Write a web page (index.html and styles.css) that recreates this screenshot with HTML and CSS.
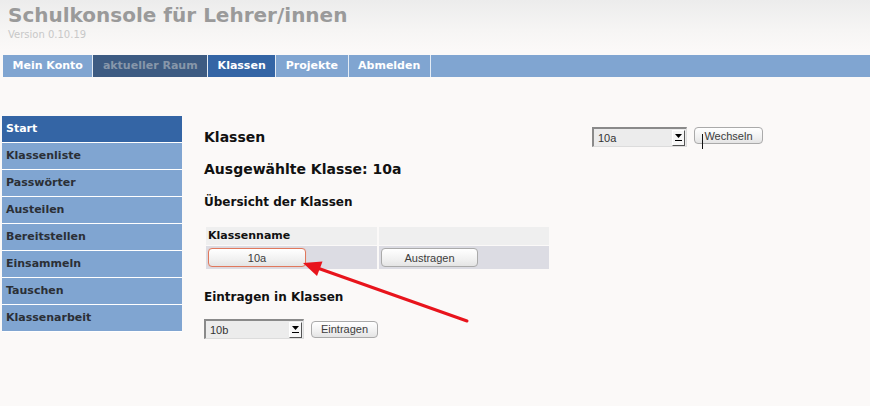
FILE: index.html
```html
<!DOCTYPE html>
<html lang="de">
<head>
<meta charset="utf-8">
<title>Schulkonsole</title>
<link rel="stylesheet" href="styles.css">
</head>
<body>
<header class="header">
  <div class="title">Schulkonsole für Lehrer/innen</div>
  <div class="version">Version 0.10.19</div>
</header>
<nav class="topnav">
  <a class="navitem">Mein Konto</a>
  <span class="navitem disabled">aktueller Raum</span>
  <a class="navitem active">Klassen</a>
  <a class="navitem">Projekte</a>
  <a class="navitem">Abmelden</a>
  <div class="navfill"></div>
</nav>
<div class="layout">
  <ul class="sidebar">
    <li class="sideitem active">Start</li>
    <li class="sideitem">Klassenliste</li>
    <li class="sideitem">Passwörter</li>
    <li class="sideitem">Austeilen</li>
    <li class="sideitem">Bereitstellen</li>
    <li class="sideitem">Einsammeln</li>
    <li class="sideitem">Tauschen</li>
    <li class="sideitem">Klassenarbeit</li>
  </ul>
  <main class="content">
    <div class="toprow">
      <h1 class="h1">Klassen</h1>
      <div class="switch">
        <div class="fakeselect sel-top">
          <span class="seltext">10a</span>
          <span class="selarrow"><svg width="7" height="7" viewBox="0 0 7 7"><path d="M0 0H7L3.5 4Z" fill="#000"/><rect x="0" y="6" width="7" height="1" fill="#000"/></svg></span>
        </div>
        <button class="btn btn-wechseln">Wechseln</button>
        <span class="cursor"></span>
      </div>
    </div>
    <h2 class="h2">Ausgewählte Klasse: 10a</h2>
    <h3 class="h3">Übersicht der Klassen</h3>
    <div class="ktable">
      <div class="th">Klassenname</div>
      <div class="th"></div>
      <div class="td"><button class="btn btn-class focus">10a</button></div>
      <div class="td"><button class="btn btn-class">Austragen</button></div>
    </div>
    <h3 class="h3 h3-add">Eintragen in Klassen</h3>
    <div class="addrow">
      <div class="fakeselect sel-add">
        <span class="seltext">10b</span>
        <span class="selarrow"><svg width="7" height="7" viewBox="0 0 7 7"><path d="M0 0H7L3.5 4Z" fill="#000"/><rect x="0" y="6" width="7" height="1" fill="#000"/></svg></span>
      </div>
      <button class="btn btn-eintragen">Eintragen</button>
    </div>
  </main>
</div>
<svg class="annot" width="870" height="406" viewBox="0 0 870 406">
  <line x1="467" y1="321" x2="316" y2="267.5" stroke="#e8141c" stroke-width="3" stroke-linecap="round"/>
  <polygon points="303,263 322.5,261.5 317,276" fill="#e8141c"/>
</svg>
</body>
</html>
```

FILE: styles.css
```css
html, body {
  margin: 0;
  padding: 0;
}
body {
  background: #fbf9f8;
  font-family: "DejaVu Sans", Verdana, sans-serif;
  color: #111;
  width: 870px;
  height: 406px;
  overflow: hidden;
  position: relative;
}
.header {
  height: 55px;
  box-sizing: border-box;
  padding: 4px 0 0 8px;
  background: linear-gradient(#ececec 0px, #f6f5f4 30px, #fbf9f8 50px);
}
.title {
  font-size: 20px;
  font-weight: bold;
  line-height: 22px;
  color: #9a9a9a;
}
.version {
  margin-top: 3px;
  font-size: 10px;
  line-height: 12px;
  color: #c8c8c8;
}
.topnav {
  display: flex;
  height: 22px;
  margin-left: 3px;
  background: #80a5d1;
}
.navitem {
  display: block;
  padding: 0 9.5px;
  font-size: 11px;
  font-weight: bold;
  line-height: 22px;
  color: #fff;
  border-right: 1px solid #e4ecf5;
  white-space: nowrap;
}
.navitem.disabled {
  background: #3d5b82;
  color: #8797aa;
}
.navitem.active {
  background: #3465a5;
}
.navfill {
  flex: 1;
}
.layout {
  display: flex;
  padding-top: 37px;
}
.sidebar {
  list-style: none;
  margin: 2px 0 0 2px;
  padding: 0;
  width: 180px;
  flex: none;
}
.sideitem {
  height: 26px;
  line-height: 26px;
  padding-left: 4px;
  border-bottom: 1px solid #fff;
  background: #80a5d1;
  font-size: 11px;
  font-weight: bold;
  color: #2b2f36;
}
.sideitem.active {
  background: #3465a5;
  color: #fff;
}
.content {
  margin-left: 22px;
  padding-top: 13px;
}
.toprow {
  width: 559px;
  display: flex;
  justify-content: space-between;
  align-items: flex-start;
}
.h1 {
  margin: 0;
  font-size: 14px;
  line-height: 20px;
  font-weight: bold;
}
.h2 {
  margin: 12px 0 0;
  font-size: 14px;
  line-height: 20px;
  font-weight: bold;
}
.h3 {
  margin: 15px 0 0;
  font-size: 12px;
  line-height: 16px;
  font-weight: bold;
}
.h3-add {
  margin-top: 20px;
}
.switch {
  position: relative;
  display: flex;
  align-items: flex-start;
  gap: 7px;
}
.cursor {
  position: absolute;
  left: 110px;
  top: 7px;
  width: 1px;
  height: 15px;
  background: #111;
}
.fakeselect {
  display: flex;
  align-items: center;
  justify-content: space-between;
  box-sizing: border-box;
  height: 20px;
  background: #ececec;
  border-left: 2px solid #8a8a8a;
  border-top: 2px solid #8a8a8a;
  border-right: 1px solid #dcdcdc;
  border-bottom: 1px solid #dcdcdc;
  font-family: "Liberation Sans", Arial, sans-serif;
  font-size: 11px;
  color: #333;
}
.sel-top {
  width: 95px;
}
.sel-add {
  width: 100px;
}
.seltext {
  padding-left: 4px;
}
.selarrow {
  display: flex;
  align-items: center;
  justify-content: center;
  box-sizing: border-box;
  width: 13px;
  height: 16px;
  margin-right: 1px;
  background: #f6f6f6;
  border-top: 1px solid #fff;
  border-left: 1px solid #fff;
  border-right: 1px solid #555;
  border-bottom: 1px solid #555;
}
.btn {
  box-sizing: border-box;
  padding: 0;
  margin: 0;
  font-family: "Liberation Sans", Arial, sans-serif;
  font-size: 11px;
  color: #3c3c3c;
  background: linear-gradient(#ffffff, #f1f1f1 60%, #e4e4e4);
  border: 1px solid #aaaaaa;
  border-radius: 4px;
}
.btn-wechseln {
  width: 69px;
  height: 17px;
}
.ktable {
  display: grid;
  grid-template-columns: 171px 170px;
  grid-template-rows: 18px 23px;
  column-gap: 2px;
  row-gap: 1px;
  margin: 17px 0 0 2px;
}
.th {
  background: #efefef;
  font-size: 11px;
  font-weight: bold;
  line-height: 18px;
  padding-left: 2px;
  color: #111;
}
.td {
  background: #dcdce3;
  padding: 2px 0 0 2px;
}
.btn-class {
  display: block;
  width: 97px;
  height: 19px;
}
.btn-class.focus {
  width: 98px;
  border-color: #e0785c;
  box-shadow: 0 0 1px #f0b0a0;
}
.addrow {
  margin-top: 14px;
  display: flex;
  align-items: center;
  gap: 7px;
}
.btn-eintragen {
  width: 67px;
  height: 17px;
}
.annot {
  position: absolute;
  left: 0;
  top: 0;
  pointer-events: none;
}
```
